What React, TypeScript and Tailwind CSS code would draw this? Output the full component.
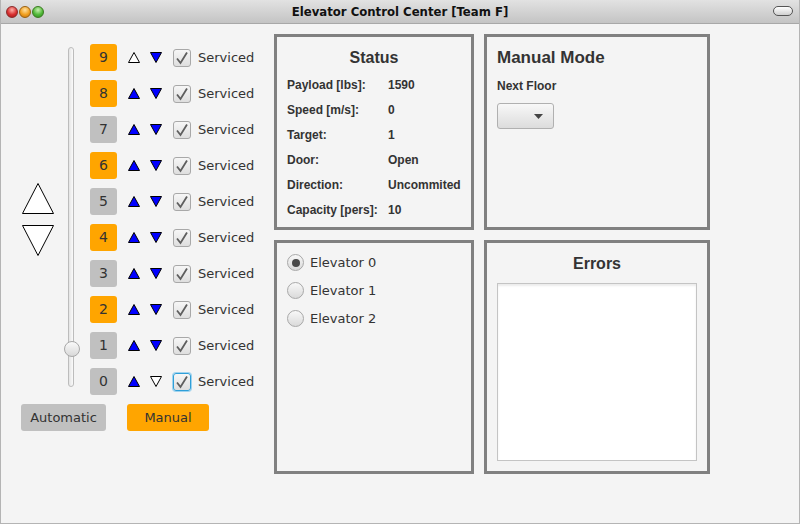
import React from 'react';

const floors = [9, 8, 7, 6, 5, 4, 3, 2, 1, 0];
const orange = new Set([9, 8, 6, 4, 2]);

function SmallArrow({ up, filled }: { up: boolean; filled: boolean }) {
  return (
    <svg width="12" height="11" viewBox="0 0 12 11" className="block">
      <polygon
        points={up ? '6,0.5 11.5,10.5 0.5,10.5' : '0.5,0.5 11.5,0.5 6,10.5'}
        fill={filled ? '#0000ff' : '#ffffff'}
        stroke="#000"
        strokeWidth="1"
      />
    </svg>
  );
}

function CheckBox({ focused }: { focused?: boolean }) {
  return (
    <div
      className={
        'w-[18px] h-[18px] rounded-[3px] border bg-gradient-to-b from-[#f6f6f6] to-[#dedede] flex items-center justify-center ' +
        (focused ? 'border-[#2f9fd8] shadow-[0_0_0_1px_#9fd3ef]' : 'border-[#a8a8a8]')
      }
    >
      <svg width="14" height="14" viewBox="0 0 14 14">
        <path d="M2 7.5 L5.5 12 L12 1.5" fill="none" stroke="#5e5e5e" strokeWidth="1.8" />
      </svg>
    </div>
  );
}

function FloorRow({ floor }: { floor: number }) {
  return (
    <div className="flex items-center h-[27px]">
      <div
        className={
          'w-[27px] h-[27px] rounded-[3px] flex items-center justify-center text-[14px] text-[#333] ' +
          (orange.has(floor) ? 'bg-[#ffa500]' : 'bg-[#c0c0c0]')
        }
      >
        {floor}
      </div>
      <div className="ml-[11px]">
        <SmallArrow up filled={floor !== 9} />
      </div>
      <div className="ml-[10px]">
        <SmallArrow up={false} filled={floor !== 0} />
      </div>
      <div className="ml-[11px]">
        <CheckBox focused={floor === 0} />
      </div>
      <span className="ml-[7px] text-[13px] text-[#333]">Serviced</span>
    </div>
  );
}

function Radio({ checked, label }: { checked?: boolean; label: string }) {
  return (
    <div className="flex items-center h-[17px]">
      <div className="w-[17px] h-[17px] rounded-full border border-[#a8a8a8] bg-gradient-to-b from-[#f8f8f8] to-[#dadada] flex items-center justify-center">
        {checked && <div className="w-[8px] h-[8px] rounded-full bg-[#4a4a4a]" />}
      </div>
      <span className="ml-[6px] text-[13px] text-[#333]">{label}</span>
    </div>
  );
}

export default function App() {
  const status = [
    ['Payload [lbs]:', '1590'],
    ['Speed [m/s]:', '0'],
    ['Target:', '1'],
    ['Door:', 'Open'],
    ['Direction:', 'Uncommited'],
    ['Capacity [pers]:', '10'],
  ];

  return (
    <div className="w-[800px] h-[524px] flex flex-col bg-[#f4f4f4] border-l border-r border-b border-[#b4b4b4] font-['DejaVu_Sans',sans-serif] overflow-hidden">
      {/* Title bar */}
      <div className="relative h-[24px] shrink-0 flex items-center justify-center bg-gradient-to-b from-[#e2e2e2] to-[#c4c4c4] border-b border-[#a8a8a8]">
        <div className="absolute left-[5px] top-[6px] flex gap-[1px]">
          <div className="w-[12px] h-[12px] rounded-full border border-[#8a2a2a] bg-[radial-gradient(circle_at_50%_30%,#ffb0a8,#d83030_55%,#a01818)]" />
          <div className="w-[12px] h-[12px] rounded-full border border-[#9a6010] bg-[radial-gradient(circle_at_50%_30%,#ffe0a0,#f0a020_55%,#c07010)]" />
          <div className="w-[12px] h-[12px] rounded-full border border-[#3a7a20] bg-[radial-gradient(circle_at_50%_30%,#c8f0b0,#50b838_55%,#2f8a20)]" />
        </div>
        <span className="text-[13px] font-bold text-[#111] font-['DejaVu_Sans_Condensed','DejaVu_Sans',sans-serif] [font-stretch:condensed]">
          Elevator Control Center [Team F]
        </span>
        <div className="absolute right-[6px] top-[6px] w-[20px] h-[10px] rounded-full border border-[#555] bg-gradient-to-b from-[#ffffff] to-[#d0d0d0]" />
      </div>

      <div className="flex flex-1">
        {/* Left controls */}
        <div className="w-[273px] pt-[20px]">
          <div className="flex items-stretch">
            <div className="ml-[21px] w-[31px] flex flex-col items-center justify-center gap-[11px]">
              <svg width="32" height="31" viewBox="0 0 32 31" className="block">
                <polygon points="16,0.5 31.5,30.5 0.5,30.5" fill="#fff" stroke="#000" strokeWidth="1" />
              </svg>
              <svg width="32" height="31" viewBox="0 0 32 31" className="block">
                <polygon points="0.5,0.5 31.5,0.5 16,30.5" fill="#fff" stroke="#000" strokeWidth="1" />
              </svg>
            </div>
            <div className="ml-[11px] w-[16px] flex pl-[4px] pt-[3px] pb-[8px]">
              <div className="relative w-[6px] rounded-full border border-[#bcbcbc] bg-gradient-to-r from-[#e4e4e4] to-[#fafafa]">
                <div className="absolute left-[-5px] top-[293px] w-[16px] h-[16px] rounded-full border border-[#a8a8a8] bg-gradient-to-b from-[#fafafa] to-[#d8d8d8]" />
              </div>
            </div>
            <div className="ml-[10px] flex flex-col gap-[9px]">
              {floors.map((f) => (
                <FloorRow key={f} floor={f} />
              ))}
            </div>
          </div>
          <div className="flex mt-[9px]">
            <button className="ml-[20px] w-[85px] h-[27px] rounded-[3px] bg-[#c0c0c0] text-[13px] text-[#333]">
              Automatic
            </button>
            <button className="ml-[21px] w-[82px] h-[27px] rounded-[3px] bg-[#ffa500] text-[13px] text-[#333]">
              Manual
            </button>
          </div>
        </div>

        {/* Panels */}
        <div className="pt-[10px] grid grid-cols-[200px_226px] grid-rows-[196px_234px] gap-x-[10px] gap-y-[10px] h-fit font-['Liberation_Sans',Arial,sans-serif] text-[#333]">
          <div className="border-[3px] border-[#808080] flex flex-col">
            <div className="mt-[11px] h-[20px] leading-[20px] text-center text-[16px] font-bold">Status</div>
            <div className="mt-[5px] pl-[10px] grid grid-cols-[101px_1fr]">
              {status.map(([k, v]) => (
                <React.Fragment key={k}>
                  <div className="h-[25px] leading-[25px] text-[12px] font-bold">{k}</div>
                  <div className="h-[25px] leading-[25px] text-[12px] font-bold">{v}</div>
                </React.Fragment>
              ))}
            </div>
          </div>

          <div className="border-[3px] border-[#808080] pl-[10px]">
            <div className="mt-[11px] h-[20px] leading-[20px] text-[17px] font-bold">Manual Mode</div>
            <div className="mt-[8px] h-[20px] leading-[20px] text-[12px] font-bold">Next Floor</div>
            <div className="mt-[7px] w-[57px] h-[26px] rounded-[3px] border border-[#b0b0b0] bg-gradient-to-b from-[#f8f8f8] to-[#dcdcdc] flex items-center justify-end pr-[10px]">
              <svg width="9" height="5" viewBox="0 0 9 5">
                <polygon points="0,0 9,0 4.5,5" fill="#444" />
              </svg>
            </div>
          </div>

          <div className="border-[3px] border-[#808080] pl-[10px] pt-[11px] flex flex-col gap-[11px] font-['DejaVu_Sans',sans-serif]">
            <Radio checked label="Elevator 0" />
            <Radio label="Elevator 1" />
            <Radio label="Elevator 2" />
          </div>

          <div className="border-[3px] border-[#808080] flex flex-col px-[10px]">
            <div className="mt-[11px] h-[20px] leading-[20px] text-center text-[16px] font-bold">Errors</div>
            <div className="mt-[9px] h-[178px] bg-white border border-[#c4c4c4] shadow-[inset_0_2px_2px_rgba(0,0,0,0.08)]" />
          </div>
        </div>
      </div>
    </div>
  );
}
